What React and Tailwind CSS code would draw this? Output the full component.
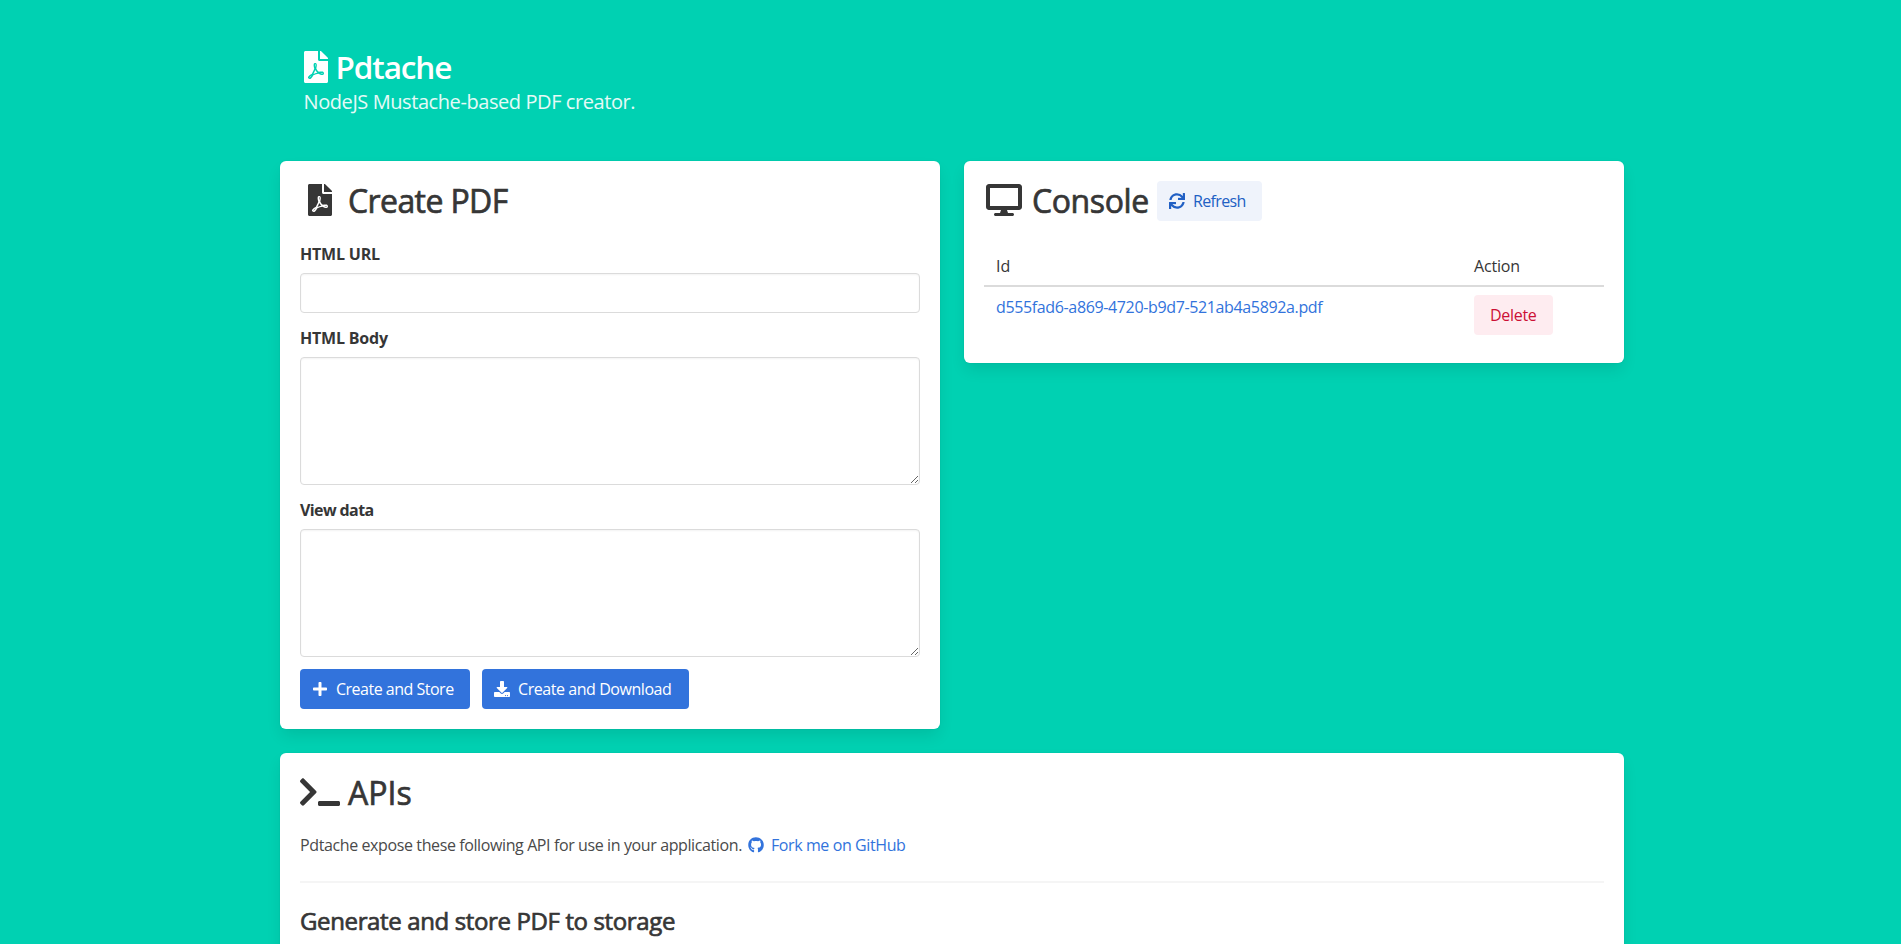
import { FaFilePdf, FaDesktop, FaSync, FaTerminal, FaPlus, FaDownload, FaGithub } from "react-icons/fa";

const card = "rounded-md bg-white p-5 shadow-[0_8px_16px_-2px_rgba(10,10,10,0.1),0_0_0_1px_rgba(10,10,10,0.02)]";
const button = "inline-flex h-10 shrink-0 items-center rounded px-4 whitespace-nowrap";
const buttonIcon = "-ml-2 mr-1 flex w-6 shrink-0 justify-center";

function CardTitle({ icon, spacing, children, extra }) {
  return (
    <div className="flex h-10 items-center">
      <span className="flex w-10 shrink-0 justify-center pb-0.5 text-[#363636]">{icon}</span>
      <h2 className={`ml-2 text-[32px] leading-9 text-[#363636] [-webkit-text-stroke:0.7px_#363636] ${spacing}`}>{children}</h2>
      {extra}
    </div>
  );
}

function Field({ label, spacing, multiline }) {
  const box = "block w-full rounded border border-[#dbdbdb] bg-white shadow-[inset_0_1px_2px_rgba(10,10,10,0.05)] outline-none";
  return (
    <label className="mb-3 block">
      <span className={`mb-[7px] block pt-px leading-6 font-bold text-[#363636] ${spacing}`}>{label}</span>
      {multiline ? <textarea className={`${box} h-32 resize-y p-3`} /> : <input className={`${box} h-10 px-3`} />}
    </label>
  );
}

export default function App() {
  return (
    <div className="h-[944px] overflow-hidden bg-[#00d1b2] font-['Open_Sans','Noto_Sans',sans-serif] text-base text-[#4a4a4a]">
      <main className="ml-[280px] w-[1344px] pt-12">
        <header className="px-[23.5px] text-white">
          <h1 className="flex h-[38px] items-center text-[31.5px] leading-9 font-semibold">
            <FaFilePdf className="h-8 w-6 shrink-0" />
            <span className="ml-2 tracking-[-1.1px]">Pdtache</span>
          </h1>
          <p className="mt-[3px] text-xl leading-[25px] tracking-[-0.42px] text-white/90">NodeJS Mustache-based PDF creator.</p>
        </header>
        <div className="mt-[47px] grid grid-cols-2 items-start gap-6">
          <section className={card}>
            <CardTitle icon={<FaFilePdf className="h-8 w-6" />} spacing="tracking-[-0.6px]">Create PDF</CardTitle>
            <div className="mt-5">
              <Field label="HTML URL" spacing="tracking-[-0.2px]" />
              <Field label="HTML Body" spacing="tracking-[-0.2px]" multiline />
              <Field label="View data" spacing="tracking-[-0.6px]" multiline />
              <div className="flex gap-3 text-white">
                <button className={`${button} w-[170px] bg-[#3273dc]`}>
                  <span className={buttonIcon}><FaPlus /></span>
                  <span className="tracking-[-0.5px]">Create and Store</span>
                </button>
                <button className={`${button} w-[207px] bg-[#3273dc]`}>
                  <span className={buttonIcon}><FaDownload /></span>
                  <span className="tracking-[-0.44px]">Create and Download</span>
                </button>
              </div>
            </div>
          </section>
          <section className={card}>
            <CardTitle
              icon={<FaDesktop className="h-8 w-9" />}
              spacing="w-[125px] shrink-0 tracking-[-0.4px]"
              extra={
                <button className={`${button} w-[105px] bg-[#eff3fb] text-[#2160c4]`}>
                  <span className={buttonIcon}><FaSync /></span>
                  <span className="tracking-[-0.65px]">Refresh</span>
                </button>
              }
            >
              Console
            </CardTitle>
            <div className="mt-6">
              <div className="flex border-b-2 border-[#dbdbdb] pt-[9px] pb-[7px] leading-6 text-[#363636]">
                <div className="w-[478px] px-3">Id</div>
                <div className="px-3 tracking-[-0.2px]">Action</div>
              </div>
              <div className="flex py-2 leading-6">
                <div className="w-[478px] px-3"><a className="tracking-[-0.36px] text-[#3273dc]">d555fad6-a869-4720-b9d7-521ab4a5892a.pdf</a></div>
                <div className="px-3">
                  <button className={`${button} w-[79px] bg-[#feecf0] tracking-[-0.3px] text-[#cc0f35]`}>Delete</button>
                </div>
              </div>
            </div>
          </section>
        </div>
        <section className={`${card} mt-6 h-[400px]`}>
          <CardTitle icon={<FaTerminal className="h-8 w-10" />} spacing="">APIs</CardTitle>
          <p className="mt-5 flex items-center leading-6">
            <span className="tracking-[-0.39px]">Pdtache expose these following API for use in your application.</span>
            <a className="flex items-center text-[#3273dc]">
              <FaGithub className="mr-[7px] ml-1.5" />
              <span className="tracking-[-0.4px]">Fork me on GitHub</span>
            </a>
          </p>
          <hr className="my-6 h-0.5 border-0 bg-[#f5f5f5]" />
          <h3 className="text-2xl leading-[27px] tracking-[-0.37px] text-[#363636] [-webkit-text-stroke:0.7px_#363636]">Generate and store PDF to storage</h3>
        </section>
      </main>
    </div>
  );
}
